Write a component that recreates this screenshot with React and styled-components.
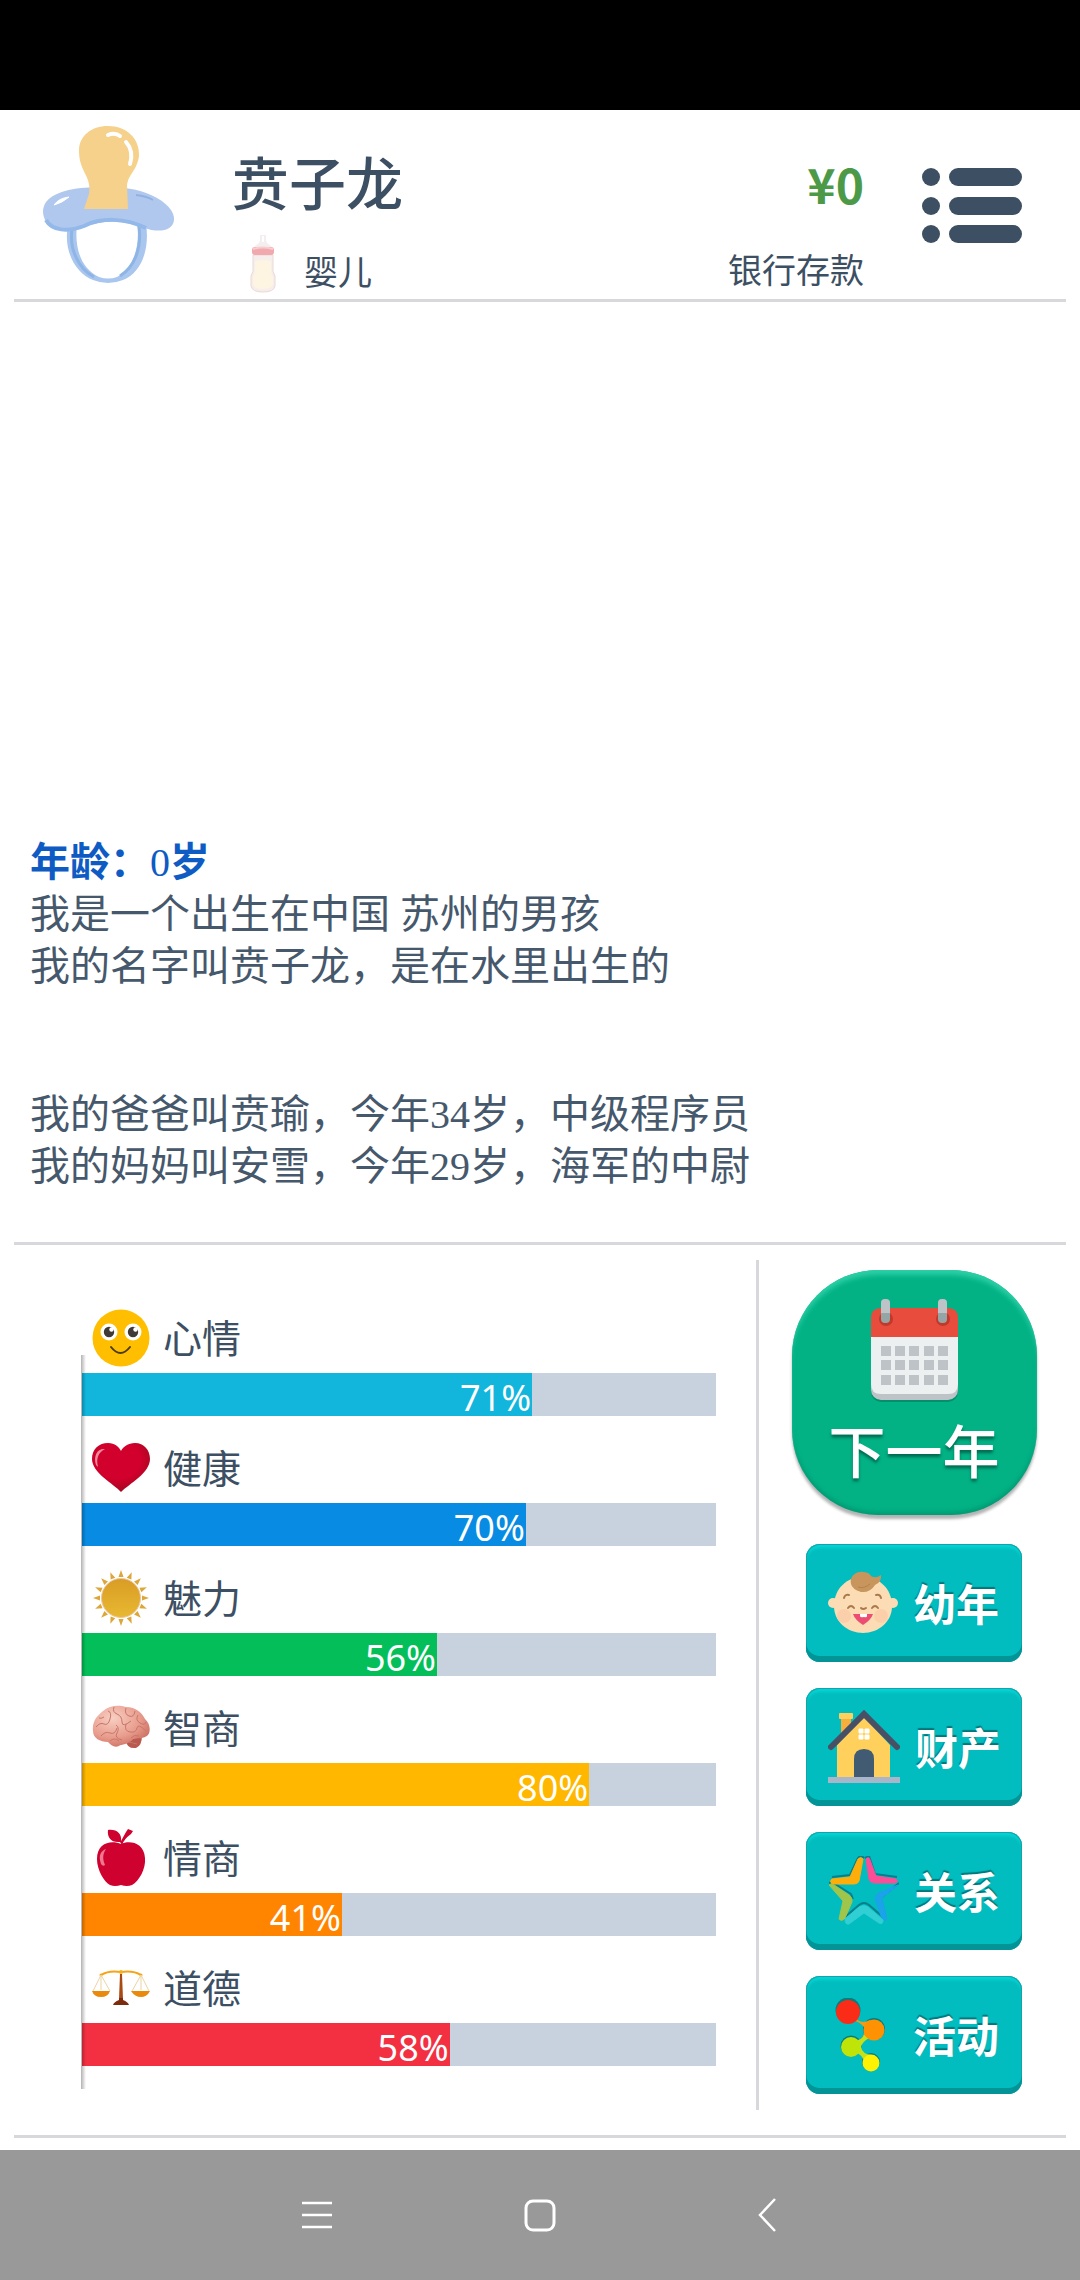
import React from "react";
import styled, { createGlobalStyle } from "styled-components";

const ink = "#3d4f63";
const line = "#d8d8dc";
const sans = `"Noto Sans CJK SC", "Noto Sans", sans-serif`;

const GlobalStyle = createGlobalStyle`
  * { box-sizing: border-box; }
  body { margin: 0; background: #fff; color: ${ink}; font-family: ${sans}; }
  button { font: inherit; color: inherit; border: 0; padding: 0; background: none; cursor: pointer; }
  h1, h2, p { margin: 0; font-weight: 400; }
  svg { display: block; flex: none; }
`;

const Screen = styled.div`
  min-height: 100vh;
  display: flex;
  flex-direction: column;
`;

const StatusStrip = styled.div`
  height: 110px;
  background: #000;
`;

const Header = styled.header`
  display: flex;
  align-items: flex-start;
  margin: 0 14px;
  padding: 16px 44px 6px 29px;
  border-bottom: 3px solid ${line};
`;

const Identity = styled.div`
  flex: 1;
  display: flex;
  flex-direction: column;
  gap: 17px;
  padding: 16px 0 0 57px;
`;

const Name = styled.h1`
  font-size: 57px;
  line-height: 76px;
  font-weight: 500;
`;

const Stage = styled.div`
  display: flex;
  align-items: flex-end;
  gap: 28px;
  padding-left: 18px;
  font-size: 34px;
  line-height: 44px;
`;

const Money = styled.div`
  display: flex;
  flex-direction: column;
  align-items: flex-end;
  gap: 21px;
  padding-top: 16px;
`;

const Amount = styled.strong`
  font-size: 48px;
  line-height: 82px;
  font-weight: 700;
  color: #4c9a48;
`;

const AmountLabel = styled.span`
  font-size: 34px;
  line-height: 48px;
`;

const MenuButton = styled.button`
  margin: 41px 0 0 58px;
`;

const Story = styled.main`
  flex: 1;
  display: flex;
  flex-direction: column;
  justify-content: flex-end;
  gap: 96px;
  padding: 49px 30px;
  color: #46586c;
  font-family: "Liberation Serif", "Noto Sans CJK SC", serif;
  font-size: 40px;
  line-height: 52px;
  font-weight: 300;
`;

const Age = styled.h2`
  font-size: 40px;
  line-height: 52px;
  font-weight: 700;
  color: #0f5bc4;
`;

const AgeNumber = styled.span`
  font-weight: 400;
`;

const Panel = styled.section`
  display: flex;
  margin: 0 14px 12px;
  border: solid ${line};
  border-width: 3px 0;
`;

const Stats = styled.div`
  flex: 1;
  padding: 41px 40px 69px 68px;
`;

const StatList = styled.div`
  position: relative;

  &::after {
    content: "";
    position: absolute;
    left: -1px;
    top: 69px;
    bottom: -23px;
    width: 5px;
    background: linear-gradient(90deg, rgba(0, 0, 0, 0.3), rgba(0, 0, 0, 0));
  }
`;

const StatHead = styled.div`
  display: flex;
  align-items: flex-start;
  gap: 13px;
  padding: 23px 0 6px 10px;
  font-size: 39px;
  line-height: 54px;
`;

const Track = styled.div`
  height: 43px;
  background: #c8d2de;
`;

const Fill = styled.div`
  height: 100%;
  padding-right: 1px;
  background: ${(p) => p.$color};
  color: #fff;
  font-family: "Noto Sans", sans-serif;
  font-size: 36px;
  line-height: 49px;
  text-align: right;
`;

const Divider = styled.div`
  width: 3px;
  margin: 15px 0 25px;
  background: ${line};
`;

const Actions = styled.nav`
  width: 307px;
  display: flex;
  flex-direction: column;
  align-items: center;
  gap: 26px;
  padding: 25px 0 41px 3px;
`;

const NextYear = styled.button`
  width: 245px;
  height: 245px;
  margin-bottom: 3px;
  display: flex;
  flex-direction: column;
  align-items: center;
  gap: 4px;
  padding-top: 28px;
  border-radius: 86px;
  background: #02b285;
  box-shadow: inset 0 6px 5px -1px #2ccfa6, inset 0 -3px 4px rgba(0, 110, 80, 0.35),
    0 4px 3px rgba(0, 0, 0, 0.3);
  color: #fff;
  font-size: 57px;
  line-height: 84px;
  font-weight: 500;
  text-shadow: 0 3px 3px rgba(0, 60, 45, 0.6);
`;

const ActionButton = styled.button`
  width: 216px;
  height: 118px;
  display: flex;
  align-items: center;
  gap: 15px;
  padding-left: 22px;
  border-radius: 14px;
  background: #02bdbf;
  box-shadow: inset 0 -6px 0 #029497, inset 0 0 0 1px #16a3a6, inset 0 5px 3px -1px #06d3d5;
  color: #fff;
  font-size: 43px;
  line-height: 60px;
  font-weight: 700;
  text-shadow: 0 -2px 1px rgba(0, 90, 92, 0.7);
`;

const ActionLabel = styled.span`
  padding-bottom: 3px;
`;

const SystemBar = styled.footer`
  display: flex;
  justify-content: center;
  height: 130px;
  background: #999;
`;

const SystemButton = styled.button`
  width: 226px;
  display: grid;
  place-items: center;
`;

const Pacifier = () => (
  <svg width="132" height="158" viewBox="0 0 132 158" aria-hidden="true">
    <path fillRule="evenodd" fill="#a9c6ef" d="M25 99C20 124 32 147 50 154Q65 160 80 154C98 147 107 124 103 98L94 96C98 124 88 144 74 151Q65 154 56 151C39 143 31 124 34 98Z" />
    <path d="M29 103C26 124 36 143 51 151" fill="none" stroke="#8eb5e6" strokeWidth="3" />
    <path d="M96 100C99 124 91 141 77 150" fill="none" stroke="#8eb5e6" strokeWidth="3" />
    <path fill="#b1c8ee" d="M0 85C1 72 14 65 38 62C66 60 91 61 108 69C124 76 132 86 131 94C130 105 116 107 101 102C82 94 61 94 41 101C19 108 0 102 0 85Z" />
    <path d="M3 94C9 105 25 106 41 100C59 91 82 92 103 102" fill="none" stroke="#92b9e9" strokeWidth="4" />
    <path d="M93 69Q103 70 110 74" fill="none" stroke="#91b1e3" strokeWidth="2" />
    <path fill="#f6d18b" d="M41 83L46 68C49 50 36 46 36 25C36 10 48 0 65 0C84 0 97 13 96 30C94 45 85 48 84 60L85 83Z" />
    <path d="M65 9Q72 6 77 10M83 16Q91 25 87 38" fill="none" stroke="#fff" strokeWidth="4" strokeLinecap="round" />
    <path d="M11 79Q16 72 26 71Q19 77 11 79Z" fill="#fff" stroke="#fff" />
  </svg>
);

const Bottle = () => (
  <svg width="26" height="58" viewBox="0 0 26 58" aria-hidden="true">
    <path d="M10 0H16V5Q16 8 20 10L23 14H3L6 10Q10 8 10 5Z" fill="#f2efee" />
    <path d="M13 1V7" stroke="#fff" strokeWidth="2" />
    <path d="M3 20H23V32Q22 36 25 41V51Q24 57 13 57T1 51V41Q4 36 3 32Z" fill="#f5eeec" stroke="#ead9d5" />
    <path d="M5 26Q13 24 21 26V33Q21 38 23 42V50Q21 54 13 54T3 50V42Q5 38 5 33Z" fill="#fdf4e1" />
    <rect x="2" y="12" width="22" height="8" rx="3" fill="#f2a9ae" />
    <path d="M3 14Q13 11 23 14" stroke="#f8cdcf" strokeWidth="2" fill="none" />
  </svg>
);

const MenuIcon = () => (
  <svg width="100" height="76" viewBox="0 0 100 76" fill={ink} aria-hidden="true">
    {[0, 29, 57].map((y) => (
      <g key={y}>
        <circle cx="9" cy={y + 10} r="9" />
        <rect x="27" y={y + 1} width="73" height="18" rx="9" />
      </g>
    ))}
  </svg>
);

const Smiley = () => (
  <svg width="58" height="58" viewBox="0 0 58 58" aria-hidden="true">
    <circle cx="29" cy="29" r="28.5" fill="#ffbf00" />
    <circle cx="17" cy="23" r="8.5" fill="#fff" />
    <circle cx="41" cy="23" r="8.5" fill="#fff" />
    <circle cx="17" cy="23" r="5.2" fill="#3f3a36" />
    <circle cx="41" cy="23" r="5.2" fill="#3f3a36" />
    <circle cx="19.5" cy="20.5" r="2.2" fill="#fff" />
    <circle cx="43.5" cy="20.5" r="2.2" fill="#fff" />
    <path d="M19 38Q28.500 50 38 38" fill="none" stroke="#4b3b14" strokeWidth="2" strokeLinecap="round" />
  </svg>
);

const Heart = () => (
  <svg width="58" height="58" viewBox="0 0 58 58" aria-hidden="true">
    <defs>
      <radialGradient id="heart" cx="0.45" cy="0.35" r="0.65">
        <stop offset="0.6" stopColor="#d1002c" />
        <stop offset="1" stopColor="#a30820" />
      </radialGradient>
    </defs>
    <path d="M29 53C22 45 0 34 0 20C0 10 7 4 16 4C23 4 27 8 29 12C31 8 36 4 43 4C52 4 58 11 58 20C58 34 37 45 29 53Z" fill="url(#heart)" />
    <path d="M4 26C1 16 6 9 13 10C6 14 4 19 6 28Z" fill="#f08a9b" />
  </svg>
);

const Sun = () => (
  <svg width="58" height="58" viewBox="0 0 58 58" aria-hidden="true">
    <defs>
      <linearGradient id="sun" x1="0" y1="0" x2="0" y2="1">
        <stop offset="0" stopColor="#d99c25" />
        <stop offset="1" stopColor="#e8b932" />
      </linearGradient>
    </defs>
    {Array.from({ length: 16 }, (_, i) => (
      <path key={i} d="M29 1L31.500 8H26.500Z" fill="#dca73a" transform={`rotate(${i * 22.5} 29 29)`} />
    ))}
    <circle cx="29" cy="29" r="19.500" fill="url(#sun)" stroke="#edc5a0" />
  </svg>
);

const Brain = () => (
  <svg width="58" height="58" viewBox="0 0 58 58" aria-hidden="true">
    <defs>
      <radialGradient id="brain" cx="0.35" cy="0.3" r="0.8">
        <stop offset="0" stopColor="#f8cfc3" />
        <stop offset="0.6" stopColor="#e89c8c" />
        <stop offset="1" stopColor="#c9695d" />
      </radialGradient>
    </defs>
    <path d="M34 42Q42 40 50 36Q50 47 44 49Q35 50 34 42Z" fill="#b9594f" />
    <path d="M1 32C0 22 5 17 11 12C18 6 27 6 34 8C44 8 50 14 53 20C58 24 59 32 56 36C52 40 45 39 41 40C37 46 29 45 27 47C22 49 19 46 16 43C8 43 1 39 1 32Z" fill="url(#brain)" />
    <g fill="none" stroke="#c6776a" strokeWidth="1">
      <path d="M4 28Q8 23 12 25T18 20T16 12M9 37Q13 32 18 34T25 29M22 8Q20 13 25 15T30 23T39 22M34 9Q32 15 37 17T43 12" />
      <path d="M24 26Q28 29 25 34T30 41M34 25Q32 32 38 33T45 29T54 32M46 16Q43 21 48 24T54 23M18 42Q22 38 27 42M39 39Q42 35 47 37M12 18Q9 20 7 19M37 43L45 45" />
    </g>
  </svg>
);

const Apple = () => (
  <svg width="58" height="58" viewBox="0 0 58 58" fill="#cf012f" aria-hidden="true">
    <path d="M29 15C20 11 5 13 5 30C5 41 12 53 18 56Q23 58 29 56Q35 58 40 56C47 52 54 40 53 29C52 13 37 11 29 15Z" />
    <path d="M28 13C19 14 15 8 16 1C25 0 30 5 29 12L34 3L36 0L41 2L39 5Q32 10 30 16Z" />
    <path d="M9 35C6 26 9 22 14 20C10 26 11 31 13 36Q11 38 9 35Z" fill="#ee7890" />
  </svg>
);

const Scales = () => (
  <svg width="58" height="58" viewBox="0 0 58 58" aria-hidden="true">
    <path d="M9 16Q17 11 29 13Q41 11 49 16" fill="none" stroke="#f6a316" strokeWidth="2" />
    <circle cx="9" cy="16" r="1.500" fill="#f6a316" />
    <circle cx="49" cy="16" r="1.500" fill="#f6a316" />
    <circle cx="29" cy="13" r="2" fill="#f6b21e" />
    <path d="M9 16L1 32M9 16L18 32M49 16L40 32M49 16L57 32M9 16V31M49 16V31" stroke="#ecd3a6" strokeWidth="1" />
    <path d="M28 15H30L31 40H27Z" fill="#a84a12" />
    <path d="M0 32H18Q16 38 9 38T0 32ZM39 32H58Q55 38 49 38T39 32Z" fill="#e98a0c" />
    <path d="M21 46Q22 43 27 41V39H31V41Q36 43 37 46Z" fill="#7c2b0c" />
  </svg>
);

const Calendar = () => (
  <svg width="87" height="104" viewBox="0 0 87 104" aria-hidden="true">
    <rect y="13" width="87" height="91" rx="10" fill="#04795c" opacity="0.6" />
    <rect y="12" width="87" height="90" rx="10" fill="#bdc3c7" />
    <path d="M0 36H87V86Q87 96 77 96H10Q0 96 0 86Z" fill="#ecf0f1" />
    <path d="M0 39V20Q0 10 10 10H77Q87 10 87 20V39Z" fill="#e74c3c" />
    {[10, 67].map((x) => (
      <g key={x}>
        <circle cx={x + 5} cy="21" r="7" fill="#c0392b" />
        <rect x={x} y="1" width="9" height="24" rx="4" fill="#95a5a6" />
        <path d={`M${x} 15V5Q${x} 1 ${x + 4.5} 1T${x + 9} 5V15Z`} fill="#bdc3c7" />
      </g>
    ))}
    {[48, 62, 77].map((y) =>
      [10, 24, 38, 53, 67].map((x) => <rect key={`${x}-${y}`} x={x} y={y} width="10" height="10" fill="#bdc3c7" />)
    )}
  </svg>
);

const Baby = () => (
  <svg width="70" height="66" viewBox="0 0 70 66" aria-hidden="true">
    <g fill="#fcdcb4">
      <circle cx="5" cy="33" r="5" />
      <circle cx="65" cy="33" r="5" />
      <path d="M35 7C52 7 63 19 64 34C65 52 50 63 35 63S5 52 6 34C7 19 18 7 35 7Z" />
    </g>
    <circle cx="16" cy="46" r="7" fill="#fbcfaa" />
    <circle cx="53" cy="46" r="7" fill="#fbcfaa" />
    <path d="M23 14C21 6 29 1 35 2Q41 2 43 6Q48 9 53 5Q54 12 47 15Q42 23 33 22Q24 19 23 14Z" fill="#c8955c" />
    <path d="M30 17Q36 19 42 14" fill="none" stroke="#b58350" />
    <g fill="none" stroke="#a9794b" strokeWidth="2" strokeLinecap="round">
      <path d="M16 28Q17 24 21 25M48 25Q52 24 53 28M20 38Q23 34 26 38M44 38Q47 34 50 38M33 38Q35 40 38 38" />
    </g>
    <path d="M25 44H45Q43 50 35 55Q27 50 25 44Z" fill="#ec4d71" />
    <path d="M32 44H39V46Q39 48 36 47Q32 48 32 46Z" fill="#fff" />
  </svg>
);

const House = () => (
  <svg width="72" height="74" viewBox="0 0 72 74" aria-hidden="true">
    <rect x="13" y="8" width="10" height="16" fill="#f6ae3d" />
    <rect x="11" y="3" width="14" height="6" rx="1" fill="#ffd15c" />
    <path d="M9 67V35L36 7L62 35V67Z" fill="#ffd15c" />
    <path d="M3 37L36 4L69 37" fill="none" stroke="#485066" strokeWidth="6" strokeLinecap="round" />
    <path d="M26 67V49Q26 39 36 39T46 49V67Z" fill="#415b73" />
    <path d="M31 19H35V23H31ZM37 19H41V23H37ZM31 25H35V29H31ZM37 25H41V29H37Z" fill="#fff" stroke="#fff" />
    <rect y="67" width="72" height="6" fill="#a9b5c8" />
  </svg>
);

const Star = () => (
  <svg width="71" height="70" viewBox="0 0 71 70" strokeWidth="1" strokeLinejoin="round" aria-hidden="true">
    <g transform="translate(0 -1)" fill="none" stroke="#067f8c" strokeWidth="2">
      <path d="M30 3Q33 0 36 3M30 3L22 20L4 22M37 3L41 1L47 19L69 22M1 28L4 27L23 39L25 44M71 28L53 43L58 64M17 62L31 50Q36 46 41 50L55 62" />
    </g>
    <path d="M30 3Q33 0 35 3L31 25Q30 28 26 28H4Q1 25 4 23L22 21Z" fill="#fdae0b" stroke="#fdae0b" />
    <path d="M38 3Q41 0 42 4L48 20L68 23Q71 26 67 27H47Q42 27 41 23Z" fill="#fb4e97" stroke="#fb4e97" />
    <path d="M70 29L54 42L59 63L57 65L53 60L47 43Q47 40 50 37Z" fill="#1ba3ea" stroke="#1ba3ea" />
    <path d="M1 29Q3 27 6 29L21 39Q25 42 24 46L17 62Q14 66 11 63L15 45Z" fill="#9fc54b" stroke="#9fc54b" />
    <path d="M17 63L31 51Q36 48 40 51L55 64Q55 69 51 67L36 57L21 68Q17 69 17 63Z" fill="#2fcfd3" stroke="#2fcfd3" />
  </svg>
);

const Molecule = () => (
  <svg width="70" height="74" viewBox="0 0 70 74" aria-hidden="true">
    <g fill="#087d7d" transform="translate(0 -1)">
      <circle cx="20" cy="13" r="12.500" />
      <circle cx="46" cy="32" r="11" />
      <circle cx="23" cy="49" r="10.500" />
      <circle cx="43" cy="65" r="9" />
    </g>
    <path d="M27 19Q32 27 42 22L41 40Q34 41 28 52L24 44Q34 43 36 36V29Q32 24 25 22Z" fill="#f39a16" />
    <path d="M36 37Q34 43 26 42L28 55Q34 56 37 65L44 57Q34 56 33 49Q34 44 41 40Z" fill="#c6e01a" />
    <circle cx="20" cy="14" r="12" fill="#fb2c17" />
    <circle cx="46" cy="32" r="10.500" fill="#fe9203" />
    <circle cx="23" cy="49" r="10" fill="#bfe508" />
    <circle cx="43" cy="65" r="8.500" fill="#fdf203" />
  </svg>
);

const stats = [
  { label: "心情", value: 71, color: "#12b5dc", Icon: Smiley },
  { label: "健康", value: 70, color: "#078be3", Icon: Heart },
  { label: "魅力", value: 56, color: "#04bf59", Icon: Sun },
  { label: "智商", value: 80, color: "#ffb700", Icon: Brain },
  { label: "情商", value: 41, color: "#ff8500", Icon: Apple },
  { label: "道德", value: 58, color: "#f33042", Icon: Scales },
];

const actions = [
  { label: "幼年", Icon: Baby },
  { label: "财产", Icon: House },
  { label: "关系", Icon: Star },
  { label: "活动", Icon: Molecule },
];

export default function App() {
  return (
    <Screen>
      <GlobalStyle />
      <StatusStrip />
      <Header>
        <Pacifier />
        <Identity>
          <Name>贲子龙</Name>
          <Stage>
            <Bottle />
            婴儿
          </Stage>
        </Identity>
        <Money>
          <Amount>¥0</Amount>
          <AmountLabel>银行存款</AmountLabel>
        </Money>
        <MenuButton aria-label="菜单">
          <MenuIcon />
        </MenuButton>
      </Header>

      <Story>
        <div>
          <Age>
            年龄：<AgeNumber>0</AgeNumber>岁
          </Age>
          <p>我是一个出生在中国 苏州的男孩</p>
          <p>我的名字叫贲子龙，是在水里出生的</p>
        </div>
        <div>
          <p>我的爸爸叫贲瑜，今年34岁，中级程序员</p>
          <p>我的妈妈叫安雪，今年29岁，海军的中尉</p>
        </div>
      </Story>

      <Panel>
        <Stats>
          <StatList>
            {stats.map(({ label, value, color, Icon }) => (
              <div key={label}>
                <StatHead>
                  <Icon />
                  {label}
                </StatHead>
                <Track role="meter" aria-label={label} aria-valuenow={value} aria-valuemin={0} aria-valuemax={100}>
                  <Fill $color={color} style={{ width: `${value}%` }}>
                    {value}%
                  </Fill>
                </Track>
              </div>
            ))}
          </StatList>
        </Stats>
        <Divider />
        <Actions>
          <NextYear>
            <Calendar />
            下一年
          </NextYear>
          {actions.map(({ label, Icon }) => (
            <ActionButton key={label}>
              <Icon />
              <ActionLabel>{label}</ActionLabel>
            </ActionButton>
          ))}
        </Actions>
      </Panel>

      <SystemBar>
        <SystemButton aria-label="最近任务">
          <svg width="36" height="36" viewBox="0 0 36 36" stroke="#fff" strokeWidth="2.500" aria-hidden="true">
            <path d="M6 6H36M6 18H36M6 30H36" />
          </svg>
        </SystemButton>
        <SystemButton aria-label="主页">
          <svg width="36" height="36" viewBox="0 0 36 36" fill="none" stroke="#fff" strokeWidth="3" aria-hidden="true">
            <rect x="4" y="4" width="28" height="29" rx="7" />
          </svg>
        </SystemButton>
        <SystemButton aria-label="返回">
          <svg width="36" height="36" viewBox="0 0 36 36" fill="none" stroke="#fff" strokeWidth="2.500" aria-hidden="true">
            <path d="M27 2L12 18L27 34" />
          </svg>
        </SystemButton>
      </SystemBar>
    </Screen>
  );
}
